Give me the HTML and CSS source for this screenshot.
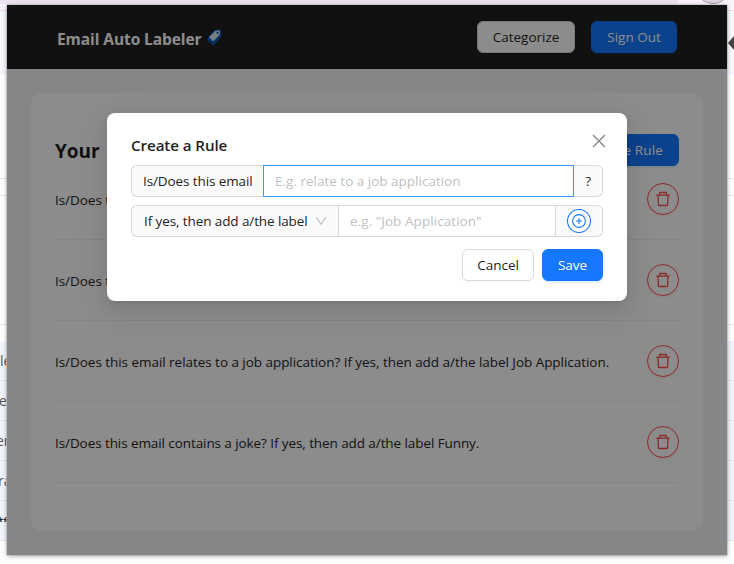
FILE: index.html
```
<!DOCTYPE html>
<html lang="en">
<head>
<meta charset="utf-8">
<title>Email Auto Labeler</title>
<link rel="stylesheet" href="styles.css">
</head>
<body>
<svg class="defs" aria-hidden="true">
  <symbol id="trash" viewBox="64 64 896 896"><path d="M360 184h-8c4.4 0 8-3.6 8-8v8h304v-8c0 4.4 3.6 8 8 8h-8v72h72v-80c0-35.3-28.7-64-64-64H352c-35.3 0-64 28.7-64 64v80h72v-72zm504 72H160c-17.7 0-32 14.3-32 32v32c0 4.4 3.6 8 8 8h60.4l24.7 523c1.6 34.1 29.8 61 63.9 61h454c34.2 0 62.3-26.8 63.9-61l24.7-523H888c4.4 0 8-3.6 8-8v-32c0-17.7-14.3-32-32-32zM731.3 840H292.7l-24.2-512h487l-24.2 512z"/></symbol>
</svg>
<div class="desktop">
  <div class="tabstrip"><div class="tabs"></div><div class="avatar"></div></div>
  <div class="band toolbar"></div>
  <div class="band blank-a"></div>
  <div class="band blank-b"></div>
  <div class="band blank-c"></div>
  <div class="band gap"></div>
  <div class="band mail"><span class="m1">le</span></div>
  <div class="band mail"><span class="m2">e</span></div>
  <div class="band mail"><span class="m3">er</span></div>
  <div class="band mail"><span class="m4">ra</span></div>
  <div class="band mail"><span class="m5">**</span></div>
</div>
<svg class="cursor" viewBox="0 0 7 16"><path d="M0 8 5.5 1.5H7V14.5H5.5Z"/></svg>

<div class="popup">
  <header class="header">
    <div class="brand"><span class="name">Email Auto Labeler</span>
      <svg class="tag" viewBox="0 0 15 17"><path class="back" d="M.5 11.5 1.5 7.5 8.2.8 13.6.5 14.2 8 6.3 16.5Z"/><path class="line" d="M1.2 11.2 6.3 14.4 13.8 6.6"/><path class="front" d="M2 8.2 8.4 1.8 12.8 1.5 12.7 5.7 6.3 12.2Z"/><circle cx="10.6" cy="3.8" r="1.1"/></svg>
    </div>
    <button class="btn categorize"><span>Categorize</span></button>
    <button class="btn primary signout"><span>Sign Out</span></button>
  </header>
  <main class="card">
    <div class="card-head"><h2>Your Rules</h2><button class="btn primary create"><span>Create Rule</span></button></div>
    <div class="rule"><span>Is/Does this</span><button class="trash"><svg><use href="#trash"/></svg></button></div>
    <div class="rule"><span>Is/Does this</span><button class="trash"><svg><use href="#trash"/></svg></button></div>
    <div class="rule"><span>Is/Does this email relates to a job application? If yes, then add a/the label Job Application.</span><button class="trash"><svg><use href="#trash"/></svg></button></div>
    <div class="rule"><span class="tight">Is/Does this email contains a joke? If yes, then add a/the label Funny.</span><button class="trash"><svg><use href="#trash"/></svg></button></div>
  </main>
  <div class="mask"></div>
  <section class="modal">
    <div class="modal-head"><h3>Create a Rule</h3>
      <svg class="close" viewBox="0 0 14 14"><path d="M1 1 13 13M13 1 1 13"/></svg>
    </div>
    <div class="group">
      <div class="addon left"><span>Is/Does this email</span></div>
      <div class="field focus"><span>E.g. relate to a job application</span></div>
      <div class="addon question">?</div>
    </div>
    <div class="group">
      <div class="addon select"><span>If yes, then add a/the label</span><svg class="chev" viewBox="0 0 12 12"><path d="M1.3 2.4 6 9.3 10.7 2.4"/></svg></div>
      <div class="field"><span class="wide">e.g. "Job Application"</span></div>
      <div class="addon plus"><svg viewBox="0 0 24 24"><circle cx="12" cy="12" r="11.5"/><circle cx="12" cy="12" r="6.4"/><path d="M12 9v6M9 12h6"/></svg></div>
    </div>
    <div class="actions"><button class="btn cancel"><span>Cancel</span></button><button class="btn primary save"><span>Save</span></button></div>
  </section>
</div>
</body>
</html>
```
FILE: styles.css
```
* { box-sizing: border-box; }
body {
  margin: 0;
  width: 734px;
  height: 564px;
  overflow: hidden;
  position: relative;
  background: #fff;
  color: #1f1f1f;
  font: 13.5px/22px "Open Sans", "Noto Sans", sans-serif;
}
h2, h3 { margin: 0; }
span { white-space: nowrap; }
.defs { position: absolute; width: 0; height: 0; }

.tabstrip { height: 10px; background: #fdf5fd; display: flex; overflow: hidden; }
.tabs { width: 679px; height: 4px; background: #ece4f1; border-radius: 0 0 12px 0; }
.avatar { width: 36px; height: 36px; margin: -32px 0 0 16px; border-radius: 50%; background: #ded6df; border: 1px solid #a5a0a8; }
.band { border-bottom: 1px solid #e3e6ec; }
.toolbar { height: 65px; background: #f6f8fd; border-top: 1px solid #eadfeb; border-bottom: 0; }
.blank-a { height: 104px; }
.blank-b { height: 17px; }
.blank-c { height: 129px; }
.gap { height: 16px; border: 0; }
.mail { height: 40px; background: #f2f5fc; color: #555; font-size: 14px; line-height: 40px; overflow: hidden; }
.mail span { display: block; width: 12px; }
.m1 { margin-left: 0; }
.m2 { margin-left: -1px; }
.m3 { margin-left: -4px; }
.m4 { margin-left: -2px; }
.m5 { margin-left: -3px; color: #222; font-size: 11px; font-weight: 700; }
.cursor { position: absolute; left: 728px; top: 35px; width: 7px; height: 16px; fill: #444; }

.popup {
  position: absolute;
  left: 7px;
  top: 5px;
  width: 720px;
  height: 550px;
  background: #f5f5f5;
  box-shadow: 0 1px 5px rgba(0, 0, 0, .35), 0 0 0 1px rgba(220, 216, 224, .7);
}
.header { height: 64px; background: #1f1f1f; display: flex; align-items: center; padding: 0 50px; gap: 16px; }
.brand { flex: 1; display: flex; align-items: center; gap: 5px; color: #fff; font-size: 15.5px; letter-spacing: -.08px; font-weight: 700; padding-top: 3px; }
.tag { width: 15px; height: 17px; margin-top: -2px; }
.tag .back { fill: #0b63cf; }
.tag .line { fill: none; stroke: #17304f; stroke-width: .8; }
.tag .front { fill: #d5e3f2; }
.tag circle { fill: #1c5fae; }

.btn {
  height: 32px;
  padding: 0;
  border: 1px solid #d9d9d9;
  border-radius: 6px;
  background: #fff;
  color: #1f1f1f;
  font: inherit;
  line-height: 22px;
  box-shadow: 0 2px 0 rgba(0, 0, 0, .02);
}
.primary { background: #1677ff; border-color: #1677ff; color: #fff; box-shadow: 0 2px 0 rgba(5, 145, 255, .1); }
.categorize { width: 98px; }
.signout { width: 86px; }
.create { width: 106px; letter-spacing: .1px; }

.card { margin: 24px; height: 438px; padding: 41px 24px 0; border-radius: 12px; background: #fff; }
.card-head { height: 32px; display: flex; justify-content: space-between; align-items: center; }
.card-head h2 { font-size: 19px; line-height: 28px; font-weight: 700; word-spacing: 2px; padding-top: 2px; }
.rule { height: 81px; display: flex; align-items: center; justify-content: space-between; border-bottom: 1px solid #f0f0f0; letter-spacing: -.043px; }
.rule > span { padding-top: 2px; }
.tight { letter-spacing: -.085px; }
.card-head + .rule { height: 74px; padding-bottom: 8px; }
.trash { width: 32px; height: 32px; padding: 0; border: 1px solid #ff4d4f; border-radius: 50%; background: #fff; display: grid; place-items: center; box-shadow: 0 2px 0 rgba(255, 38, 5, .06); }
.trash svg { width: 16px; height: 16px; fill: #ff4d4f; }

.mask { position: absolute; inset: 0; background: rgba(0, 0, 0, .45); }
.modal {
  position: absolute;
  left: 100px;
  top: 108px;
  width: 520px;
  height: 188px;
  padding: 20px 24px;
  border-radius: 8px;
  background: #fff;
  box-shadow: 0 6px 16px rgba(0, 0, 0, .08), 0 3px 6px -4px rgba(0, 0, 0, .12), 0 9px 28px 8px rgba(0, 0, 0, .05);
}
.modal-head { height: 24px; margin-bottom: 8px; display: flex; justify-content: space-between; }
.modal-head h3 { font-size: 15.2px; line-height: 24px; letter-spacing: -.1px; font-weight: 600; }
.close { width: 14px; height: 14px; margin: 1px -3px 0 0; stroke: #8c8c8c; stroke-width: 1.5; fill: none; }
.group { height: 32px; display: flex; margin-bottom: 8px; }
.addon, .field { height: 32px; border: 1px solid #d9d9d9; display: flex; align-items: center; }
.addon { background: #fafafa; flex: none; letter-spacing: -.1px; }
.addon:first-child { border-radius: 6px 0 0 6px; border-right: 0; }
.addon:last-child { border-radius: 0 6px 6px 0; border-left: 0; }
.left { width: 132px; padding-left: 11px; }
.field { flex: 1; padding-left: 11px; color: #bfbfbf; }
.wide { letter-spacing: .06px; }
.focus { border-color: #4096ff; }
.question { width: 29px; justify-content: center; }
.select { width: 207px; padding: 0 11px 0 12px; justify-content: space-between; }
.chev { width: 12px; height: 12px; fill: none; stroke: #bfbfbf; stroke-width: 1.1; }
.plus { width: 47px; justify-content: center; }
.plus svg { width: 24px; height: 24px; fill: #fff; stroke: #1677ff; stroke-width: 1.1; }
.actions { display: flex; justify-content: flex-end; gap: 8px; margin-top: 12px; }
.cancel { width: 72px; }
.save { width: 61px; }
```
